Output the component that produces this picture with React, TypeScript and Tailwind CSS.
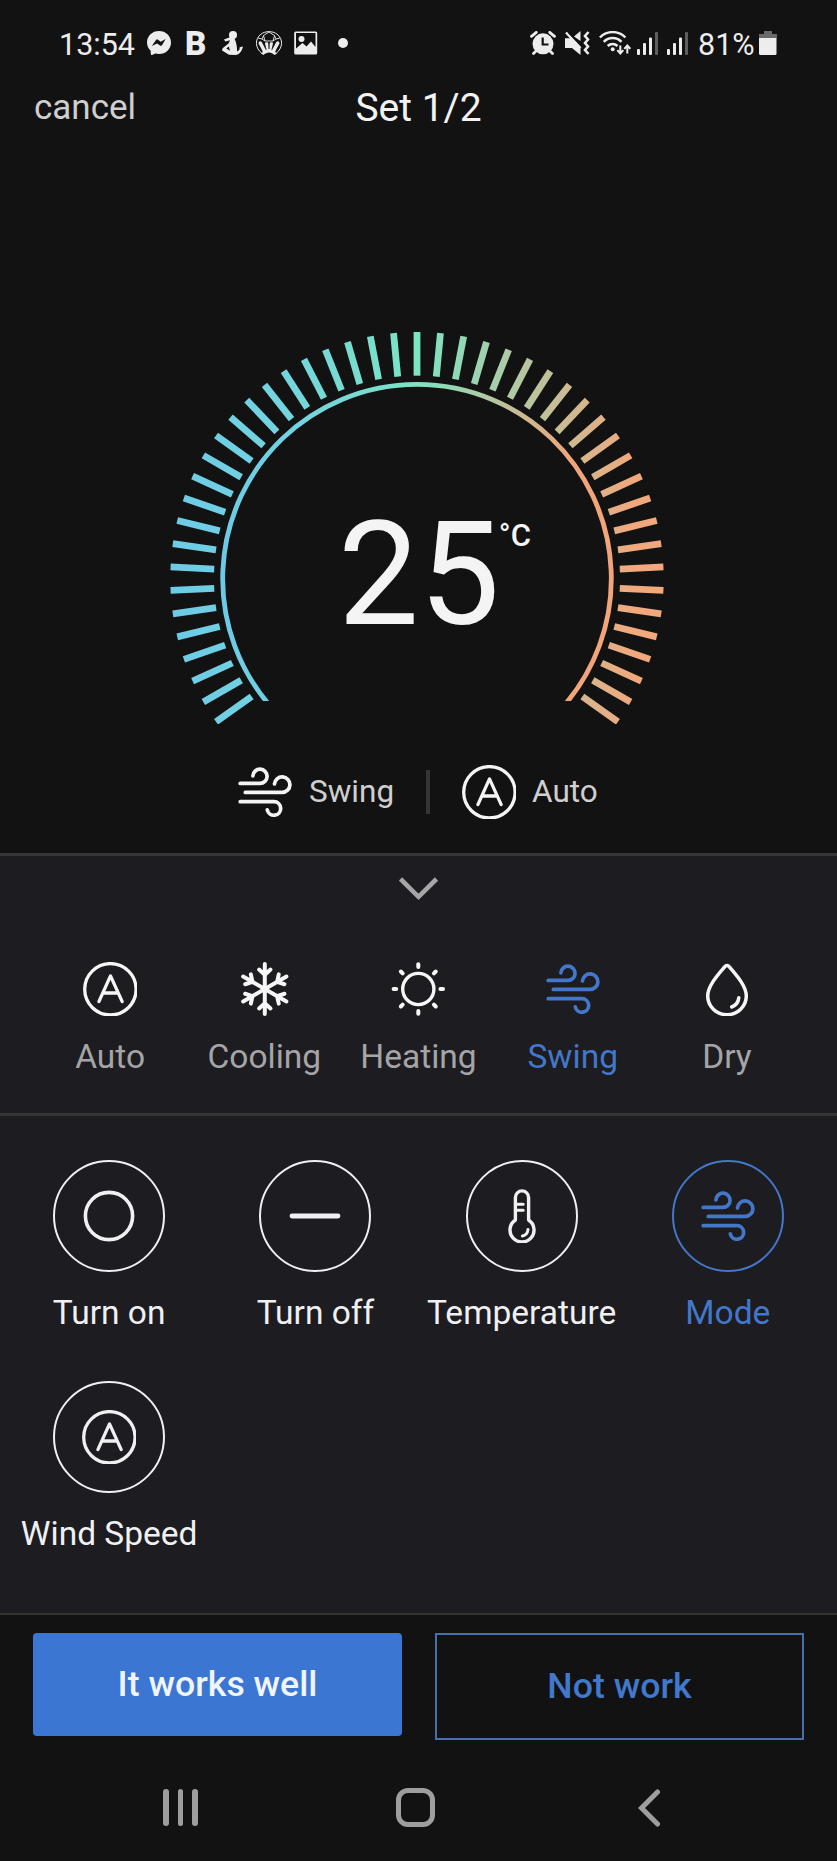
import { useState, type ReactNode } from "react";
import { clsx } from "clsx";

const STEP = 360 / 66;
const TICKS = Array.from({ length: 47 }, (_, i) => (i - 23) * STEP);

function Icon({ children, width = 3.5 }: { children: ReactNode; width?: number }) {
  return (
    <svg
      className="h-[54px] w-[54px] shrink-0"
      viewBox="0 0 54 54"
      fill="none"
      stroke="currentColor"
      strokeWidth={width}
      strokeLinecap="round"
      strokeLinejoin="round"
    >
      {children}
    </svg>
  );
}

function WindIcon() {
  return (
    <Icon width={3.7}>
      <path d="M2.2 18.4H22a7.1 7.1 0 1 0-7.1-7.6" />
      <path d="M7.3 27.4H44.2a7.75 7.75 0 1 0-7.75-8.4" />
      <path d="M2.2 36.7H36a6.75 6.75 0 1 1-6.7 8.1" />
    </Icon>
  );
}

function AutoIcon() {
  return (
    <Icon width={3.3}>
      <circle cx="27.4" cy="27.3" r="25.7" />
      <path d="M15.9 39.6L27.5 13.9L39.2 39.6M20.4 31H34.6" />
    </Icon>
  );
}

function SnowIcon() {
  return (
    <Icon width={4}>
      {[0, 60, 120, 180, 240, 300].map((a) => (
        <path
          key={a}
          transform={`rotate(${a} 27.8 27)`}
          d="M27.8 27V2M22.1 7.6L27.8 12.8L33.5 7.6"
        />
      ))}
    </Icon>
  );
}

function SunIcon() {
  return (
    <Icon width={3.4}>
      <circle cx="27.3" cy="27" r="15.6" />
      {[0, 45, 90, 135, 180, 225, 270, 315].map((a) => (
        <path
          key={a}
          transform={`rotate(${a} 27.3 27)`}
          d="M27.3 2.3V4.900"
          strokeWidth="4"
        />
      ))}
    </Icon>
  );
}

function DropIcon() {
  return (
    <Icon width={3.5}>
      <path d="M27 3.5Q28.3 3.5 29.5 5C36 12.5 46.3 24 46.3 34A19.3 18.7 0 0 1 7.7 34C7.7 24 18 12.5 24.5 5Q25.7 3.5 27 3.5Z" />
      <path d="M38.8 35.8C38.3 40.5 35.5 43.6 31.7 45" />
    </Icon>
  );
}

function ThermometerIcon() {
  return (
    <Icon width={3.4}>
      <path d="M20.4 31V8.5a6.6 6.6 0 0 1 13.2 0V31a12 12 0 1 1-13.2 0z" />
      <path d="M20.4 15.3H28.2M20.4 21.3H28.2M33 40.6C32.6 44 30.6 46.3 27.4 47" strokeWidth="3" />
    </Icon>
  );
}

function CircleIcon() {
  return (
    <Icon width={3.6}>
      <circle cx="27" cy="27" r="23.6" />
    </Icon>
  );
}

function MinusIcon() {
  return (
    <Icon width={4.8}>
      <path d="M4 27H50" />
    </Icon>
  );
}

const MODES = [
  { id: "auto", label: "Auto", icon: <AutoIcon /> },
  { id: "cooling", label: "Cooling", icon: <SnowIcon /> },
  { id: "heating", label: "Heating", icon: <SunIcon /> },
  { id: "swing", label: "Swing", icon: <WindIcon /> },
  { id: "dry", label: "Dry", icon: <DropIcon /> },
];

const ACTIONS = [
  { id: "on", label: "Turn on", icon: <CircleIcon /> },
  { id: "off", label: "Turn off", icon: <MinusIcon /> },
  { id: "temperature", label: "Temperature", icon: <ThermometerIcon /> },
  { id: "mode", label: "Mode", icon: <WindIcon /> },
  { id: "wind", label: "Wind Speed", icon: <AutoIcon /> },
];

function SignalBars() {
  return (
    <svg className="h-6 w-[21px]" viewBox="0 0 21 24" fill="currentColor">
      <rect x="0" y="18" width="3" height="6" rx="1" />
      <rect x="6" y="12" width="3" height="12" rx="1" />
      <rect x="12" y="6.5" width="3" height="17.5" rx="1" />
      <rect x="18" y="1" width="3" height="23" rx="1" opacity=".35" />
    </svg>
  );
}

function StatusBar() {
  return (
    <div className="flex h-[86px] items-center pl-[59px] text-[#ededed]">
      <span className="mt-[3px] w-[88px] text-[30.500px] leading-9">13:54</span>

      {/* messenger */}
      <svg className="h-6 w-6" viewBox="0 0 24 24">
        <path fill="currentColor" d="M12 0C5.2 0 0 4.9 0 11.4c0 3.3 1.4 6.2 3.6 8.2l.2 3.5c0 .7.7 1.1 1.3.8l3.2-1.3c1.2.3 2.4.5 3.7.5 6.8 0 12-5 12-11.6S18.800 0 12 0z" />
        <path fill="#121212" d="M4.800 15L9 8.900q.9-1 2-.2l2.700 2 4.900-2.700L15 14.200q-.9 1.100-2 .3l-2.900-2.100z" />
      </svg>
      <span className="mt-[2px] ml-[14px] w-[24px] text-[33px] leading-9 font-black">B</span>

      {/* swimmer */}
      <svg className="ml-[13px] h-6 w-[21px]" viewBox="0 0 21 24" fill="currentColor">
        <circle cx="11" cy="4" r="4" />
        <path d="M8.500 6L2 8.600l1.300 1.800 4.700-1.200-1.500 3.300L.6 17.200 0 19.500l7 4.300 7 .2c4-1 6-4.500 7-8.600l-3.300.9-.4 2.700-2.200 1.500c0-4-.3-8-2.600-13zM6.800 15.400l1.200 4.400-3.700-2.400z" />
      </svg>

      {/* football */}
      <svg className="ml-[13px] h-6 w-[26px]" viewBox="0 0 26 24" fill="none" stroke="currentColor">
        <path d="M6 22.500C-1 17-1.500 8 5 3.200 9-.2 17-.2 21 3.200c6.500 4.800 6 13.800-1 19.300" />
        <path d="M7.500 4.500L13 1l5.500 3.500L17 10h-8zM2 7l4 1 1.500-3.500M24 7l-4 1-1.500-3.500M9 10l-3-2M17 10l3-2" strokeWidth=".9" />
        <path fill="currentColor" stroke="none" d="M5 22.500c2-.5 2-2 .8-4L2.500 12.500c0-2 2-3 3.200-1.500l4 7.500c.3 1 .8.800.8 0L9 12.500c0-1.800 3-1.800 3.300 0l.2 5.500h1l.2-5.500c.3-1.800 3.300-1.800 3.300 0l-1.500 6c0 .8.500 1 .8 0l4-7.500c1.200-1.500 3.200-.5 3.200 1.500l-3.300 6c-1.200 2-1.200 3.500.8 4l-2.500 1.500c-3-3.500-8-3.500-11 0z" />
      </svg>

      {/* gallery */}
      <svg className="ml-3 h-6 w-6" viewBox="0 0 24 24">
        <rect x=".2" y=".5" width="23" height="23" rx="1.500" fill="currentColor" />
        <path fill="#121212" d="M2 2h19.500v14l-4.500-5.500-4.500 5-4-3.500L2 17.500z" />
        <circle cx="7.500" cy="8" r="3" fill="currentColor" />
      </svg>
      <i className="ml-[20px] h-[10px] w-[10px] rounded-full bg-current" />

      {/* alarm */}
      <svg className="ml-[182px] h-6 w-[26px]" viewBox="0 0 26 24" fill="none" stroke="currentColor">
        <circle cx="13" cy="12.800" r="10.500" fill="currentColor" stroke="none" />
        <path d="M1.500 5.300L6.300 1.300M24.500 5.300L19.700 1.300M3.500 22.500L7 19M22.500 22.500L19 19" strokeWidth="2.800" strokeLinecap="round" />
        <path d="M12.700 6.500V13.500H18.500" stroke="#121212" strokeWidth="2.200" />
      </svg>

      {/* muted, vibrate */}
      <svg className="ml-[9px] h-6 w-[25px]" viewBox="0 0 25 24" fill="currentColor">
        <path d="M0 7.200h6.500l9 8.800v8l-8.500-7H0zM9 5.500L15.500 0v10z" />
        <path d="M1 1.500L15.500 17" stroke="currentColor" strokeWidth="2.400" />
        <path d="M3.500 1.500L16 14" stroke="#121212" strokeWidth="1.300" />
        <path d="M23.500 1l-3.500 4 3 3.500-3 3.500 3 3.500-3 3.500 3.500 4" fill="none" stroke="currentColor" strokeWidth="2.600" />
      </svg>

      {/* wifi */}
      <svg className="ml-[9px] h-6 w-[32px]" viewBox="0 0 32 24" fill="none" stroke="currentColor" strokeWidth="2.500">
        <path d="M.9 6.500c7-7.200 18.500-7.200 25.500 0M4.800 10.800c5-5 12.700-5 17.700 0M8.700 15c2.800-2.800 7-2.800 9.800 0" />
        <circle cx="13.700" cy="18.300" r="2" fill="currentColor" stroke="none" />
        <path d="M21.300 14.500v7.500M18.300 19.200l3 3.300 3-3.300M28.300 22.500V15M25.300 17.800l3-3.300 3 3.300" strokeWidth="2" />
      </svg>
      <div className="ml-[6px] flex gap-[9px]">
        <SignalBars />
        <SignalBars />
      </div>
      <span className="mt-[3px] ml-[10px] w-[61px] text-[30.500px] leading-9">81%</span>
      <svg className="h-6 w-[18px]" viewBox="0 0 18 24" fill="currentColor">
        <path d="M5 0h8v3h5v4H0V3h5z" opacity=".4" />
        <path d="M0 7h17.500v15.500q0 1.500-1.500 1.500h-14.500q-1.500 0-1.500-1.500z" />
      </svg>
    </div>
  );
}

function Gauge({ value }: { value: number }) {
  return (
    <div className="relative mt-[204px] ml-[170px] h-[392px] w-[494px]">
      <svg className="h-full w-full" viewBox="0 0 494 392" fill="none">
        <defs>
          <linearGradient id="ticks" gradientUnits="userSpaceOnUse" x1="0" y1="0" x2="494" y2="0">
            <stop offset="0" stopColor="#6dcae6" />
            <stop offset=".2" stopColor="#73d3e0" />
            <stop offset=".5" stopColor="#7be4c3" />
            <stop offset=".94" stopColor="#f2a87d" />
          </linearGradient>
          <linearGradient id="ring" gradientUnits="userSpaceOnUse" x1="50" y1="0" x2="444" y2="0">
            <stop offset="0" stopColor="#6dcae6" />
            <stop offset=".2" stopColor="#73d3e0" />
            <stop offset=".5" stopColor="#7be4c3" />
            <stop offset=".9" stopColor="#f2a47b" />
          </linearGradient>
          <clipPath id="cut">
            <rect width="494" height="369" />
          </clipPath>
          <clipPath id="bars">
            {TICKS.map((a) => (
              <rect
                key={a}
                x="243.600"
                y="0"
                width="6.800"
                height="43.700"
                transform={`rotate(${a} 247 246.700)`}
              />
            ))}
          </clipPath>
        </defs>
        <rect width="494" height="392" fill="url(#ticks)" clipPath="url(#bars)" />
        <path
          d="M101.100 375A194.300 194.300 0 1 1 392.900 375"
          stroke="url(#ring)"
          strokeWidth="4.800"
          clipPath="url(#cut)"
        />
      </svg>
      <div className="absolute top-[171px] left-[168px] flex text-[#f4f4f4]">
        <span className="text-[144px] leading-[144px]">{value}</span>
        <span className="mt-[15px] -ml-px text-[31px] leading-9 font-medium">°C</span>
      </div>
    </div>
  );
}

export default function App() {
  const [mode, setMode] = useState("swing");
  const [action, setAction] = useState("mode");

  return (
    <div className="flex h-[1861px] w-[837px] flex-col overflow-hidden bg-[#121212] font-['Roboto',sans-serif]">
      <StatusBar />
      <header className="grid h-[42px] grid-cols-3 items-center px-[33px]">
        <button className="pt-px pl-px text-left text-[35px] leading-[42px] text-[#cfcfcf]">cancel</button>
        <h1 className="text-center text-[39px] leading-[42px] text-[#f2f2f2]">Set 1/2</h1>
      </header>

      <Gauge value={25} />

      <div className="mt-[41px] flex h-[54px] items-center pl-[238px] text-[31.500px] text-[#cfcfcf]">
        <span className="text-[#f4f4f4]">
          <WindIcon />
        </span>
        <span className="ml-[17px] w-[86px]">Swing</span>
        <i className="ml-[31px] h-11 w-1 bg-[#353536]" />
        <span className="ml-8 text-[#f4f4f4]">
          <AutoIcon />
        </span>
        <span className="ml-4">Auto</span>
      </div>

      <section className="mt-[34px] border-t-3 border-[#363639] bg-[#1d1c20]">
        <svg className="mx-auto mt-[21px] h-6 w-[40px]" viewBox="0 0 40 24" fill="none" stroke="#a6a6a9" strokeWidth="4.600">
          <path d="M1.500 2L19.500 19.800L37.500 2" />
        </svg>
        <div className="mt-[61px] grid grid-cols-5 px-[33px] pb-9">
          {MODES.map((m) => (
            <button
              key={m.id}
              onClick={() => setMode(m.id)}
              className={clsx(
                "flex flex-col items-center",
                m.id === mode ? "text-[#4377c9]" : "text-[#a5a5a7]"
              )}
            >
              <span className={clsx(m.id !== mode && "text-[#f6f6f6]")}>{m.icon}</span>
              <span className="mt-[21px] text-[33.500px] leading-10">{m.label}</span>
            </button>
          ))}
        </div>
      </section>

      <section className="grid h-[500px] grid-cols-4 content-start gap-y-12 border-t-3 border-[#343437] bg-[#1d1c20] px-[6px] pt-11">
        {ACTIONS.map((a) => (
          <button
            key={a.id}
            onClick={() => setAction(a.id)}
            className={clsx(
              "flex flex-col items-center",
              a.id === action ? "text-[#4377c9]" : "text-[#f0f0f3]"
            )}
          >
            <span className="flex h-28 w-28 items-center justify-center rounded-full border-2 border-current">
              {a.icon}
            </span>
            <span className="mt-[21px] text-[33.500px] leading-10 whitespace-nowrap">{a.label}</span>
          </button>
        ))}
      </section>

      <footer className="border-t-2 border-[#333334]">
        <div className="mt-[18px] flex h-[107px] items-start gap-[33px] px-[33px] text-[35.700px] font-medium">
          <button className="h-[103px] w-[369px] rounded bg-[#3b76d2] text-[#f0f4fb]">
            It works well
          </button>
          <button className="h-[107px] w-[369px] border-2 border-[#466fae] text-[#4278cb]">
            Not work
          </button>
        </div>
        <nav className="mt-12 flex h-[39px] items-center pl-[163px]">
          <div className="flex gap-[9px]">
            <i className="h-[37px] w-[5.500px] rounded-full bg-[#9e9e9e]" />
            <i className="h-[37px] w-[5.500px] rounded-full bg-[#9e9e9e]" />
            <i className="h-[37px] w-[5.500px] rounded-full bg-[#9e9e9e]" />
          </div>
          <i className="ml-[198px] h-[39px] w-[39px] rounded-xl border-5 border-[#9e9e9e]" />
          <svg className="ml-[203px] h-[38px] w-[22px]" viewBox="0 0 22 38" fill="none" stroke="#9e9e9e" strokeWidth="5" strokeLinecap="round">
            <path d="M19.500 3L3.500 19L19.500 35" />
          </svg>
        </nav>
      </footer>
    </div>
  );
}
